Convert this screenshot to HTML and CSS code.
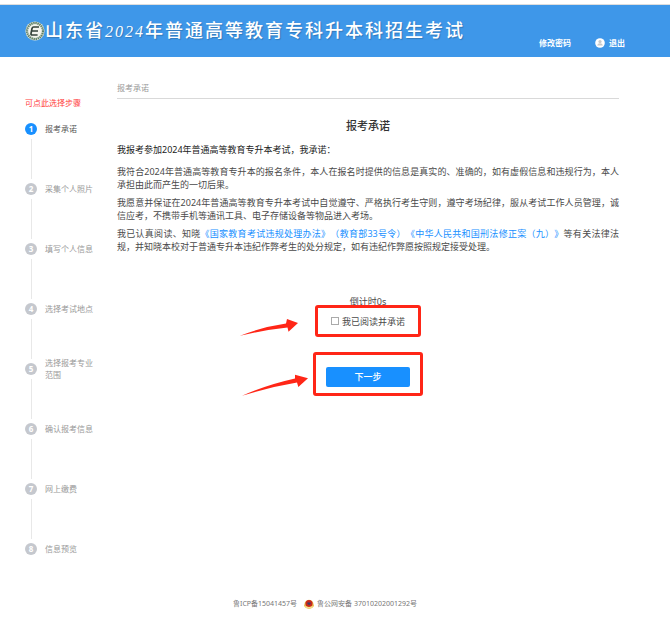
FILE: index.html
```
<!DOCTYPE html>
<html lang="zh-CN">
<head>
    <meta charset="UTF-8">
    <meta name="viewport" content="width=device-width, initial-scale=1.0">
    <title>报考承诺</title>
    <link rel="stylesheet" href="styles.css">
</head>
<body>
<!-- Header -->
<header class="header">
    <div class="brand">
        <svg class="logo" viewBox="0 0 20 20" aria-hidden="true">
            <circle cx="10" cy="10" r="9.6" fill="#dfe6d8"/>
            <circle cx="10" cy="10" r="8" fill="none" stroke="#5f7f68" stroke-width="2.2" stroke-dasharray="1.4 0.7"/>
            <circle cx="10" cy="10" r="6.4" fill="#f4f4ee"/>
            <path d="M14 6H8.6Q7.4 6 7 7.4L6 12.6Q5.8 14 7.2 14H12.6M6.8 10H13" fill="none" stroke="#34423a" stroke-width="1.7"/>
        </svg>
        <h1>山东省<span class="year">2024</span>年普通高等教育专科升本科招生考试</h1>
    </div>
    <nav class="nav">
        <a href="#">修改密码</a>
        <a href="#" class="logout">
            <svg viewBox="0 0 10 10" aria-hidden="true">
                <circle cx="5" cy="5" r="4.8" fill="#fff"/>
                <circle cx="5" cy="3.6" r="1.6" fill="#c9c9c9"/>
                <path d="M2.2 7.6Q2.4 5.2 5 5.2T7.8 7.6Z" fill="#c9c9c9"/>
            </svg>
            退出
        </a>
    </nav>
</header>

<div class="container">
    <!-- Steps -->
    <aside class="sidebar">
        <p class="tip">可点此选择步骤</p>
        <ol class="steps">
            <li class="active"><span class="num">1</span><a href="#">报考承诺</a></li>
            <li><span class="num">2</span><a href="#">采集个人照片</a></li>
            <li><span class="num">3</span><a href="#">填写个人信息</a></li>
            <li><span class="num">4</span><a href="#">选择考试地点</a></li>
            <li><span class="num">5</span><a href="#">选择报考专业范围</a></li>
            <li><span class="num">6</span><a href="#">确认报考信息</a></li>
            <li><span class="num">7</span><a href="#">网上缴费</a></li>
            <li><span class="num">8</span><a href="#">信息预览</a></li>
        </ol>
    </aside>

    <!-- Main content -->
    <main class="main-content">
        <div class="crumb">报考承诺</div>
        <h2>报考承诺</h2>
        <p class="intro">我报考参加2024年普通高等教育专升本考试，我承诺：</p>
        <div class="promise">
            <p>我符合2024年普通高等教育专升本的报名条件，本人在报名时提供的信息是真实的、准确的，如有虚假信息和违规行为，本人承担由此而产生的一切后果。</p>
            <p>我愿意并保证在2024年普通高等教育专升本考试中自觉遵守、严格执行考生守则，遵守考场纪律，服从考试工作人员管理，诚信应考，不携带手机等通讯工具、电子存储设备等物品进入考场。</p>
            <p>我已认真阅读、知晓<a href="#">《国家教育考试违规处理办法》（教育部33号令）</a><a href="#">《中华人民共和国刑法修正案（九）》</a>等有关法律法规，并知晓本校对于普通专升本违纪作弊考生的处分规定，如有违纪作弊愿按照规定接受处理。</p>
        </div>

        <form class="confirm">
            <div class="countdown">倒计时0s</div>
            <div class="mark mark-agree">
                <svg class="arrow" viewBox="0 0 58 19" aria-hidden="true">
                    <path d="M0 17.8Q22 9 46 5.5L47 1L58 5L48.5 13.7L47.5 9.5Q24 12 0 17.8Z"/>
                </svg>
                <input type="checkbox" id="agree">
                <label for="agree">我已阅读并承诺</label>
            </div>
            <div class="mark mark-next">
                <svg class="arrow" viewBox="0 0 66 22" aria-hidden="true">
                    <path d="M0 21.8Q24 11 53 4.5L53 0.7L66 4.3L56.3 13L55 8.5Q28 13 0 21.8Z"/>
                </svg>
                <button type="button">下一步</button>
            </div>
        </form>
    </main>
</div>

<!-- Footer -->
<footer class="footer">
    <a href="#">鲁ICP备15041457号</a>
    <a href="#" class="police">
        <svg viewBox="0 0 10 10" aria-hidden="true">
            <path d="M1 3Q5 -1.6 9 3L10 7Q8 10 5 10T0 7Z" fill="#e9b84b"/>
            <circle cx="5" cy="4.4" r="3.5" fill="#c9281c"/>
            <path d="M3.4 3.4H6.6V4.8Q6.2 5.6 5 6Q3.8 5.6 3.4 4.8Z" fill="#38406e"/>
            <path d="M1.2 7.6Q5 9.8 8.8 7.6" fill="none" stroke="#f7de8c" stroke-width="1.4"/>
        </svg>
        鲁公网安备 37010202001292号
    </a>
</footer>
</body>
</html>
```
FILE: styles.css
```
* {
    box-sizing: border-box;
}

body {
    margin: 0;
    background: #fff;
    color: #4a4a4a;
    font-family: "Noto Sans", "Noto Sans CJK SC", sans-serif;
    font-size: 9px;
    line-height: 13px;
    text-spacing-trim: space-all;
}

h1, h2, p, ol {
    margin: 0;
    padding: 0;
}

a {
    color: inherit;
    text-decoration: none;
}

/* Header */
.header {
    display: flex;
    justify-content: space-between;
    margin-top: 4px;
    padding: 0 45px 0 25px;
    border-top: 1px solid #ddd;
    background: #3e97e9;
    color: #fff;
}

.brand {
    display: flex;
    align-items: center;
    height: 52px;
}

.logo {
    width: 20px;
    height: 20px;
}

.brand h1 {
    font-family: "Liberation Serif", "Noto Sans CJK SC", serif;
    font-size: 18px;
    font-weight: 500;
    line-height: 24px;
    letter-spacing: 2px;
    white-space: nowrap;
    text-shadow: 1px 1px 1px rgba(0, 0, 0, 0.2);
}

.year {
    font-size: 16px;
    font-style: italic;
}

.nav {
    display: flex;
    align-items: flex-end;
    gap: 24px;
    padding-bottom: 8px;
    font-size: 8px;
    font-weight: 700;
    line-height: 12px;
}

.logout {
    display: flex;
    align-items: center;
    gap: 4px;
}

.logout svg {
    width: 10px;
    height: 10px;
}

.container {
    display: flex;
    padding: 0 51px 0 25px;
}

/* Steps */
.sidebar {
    flex: none;
    width: 92px;
    padding-top: 40px;
    font-size: 8px;
    line-height: 12px;
}

.tip {
    color: #ff4040;
}

.steps {
    margin-top: 14px;
    list-style: none;
}

.steps li {
    display: grid;
    grid-template-columns: 12px 48px;
    grid-template-rows: 12px 40px;
    gap: 4px 8px;
    align-items: center;
    margin-bottom: 4px;
    color: #999;
}

.steps li:last-child {
    grid-template-rows: 12px;
    margin-bottom: 0;
}

.steps li::after {
    content: "";
    justify-self: center;
    width: 1px;
    height: 40px;
    background: #e8e8e8;
}

.steps li:last-child::after {
    display: none;
}

.num {
    width: 12px;
    height: 12px;
    border-radius: 50%;
    background: #c5c8ce;
    color: #fff;
    font-weight: 700;
    text-align: center;
}

.steps .active {
    color: #555;
}

.active .num {
    background: #1890ff;
}

/* Main content */
.main-content {
    flex: 1;
    padding-top: 25px;
}

.crumb {
    padding-bottom: 4px;
    border-bottom: 1px solid #d9d9d9;
    color: #999;
    font-size: 8px;
    line-height: 12px;
}

.main-content h2 {
    margin-top: 19px;
    color: #333;
    font-size: 11px;
    font-weight: 500;
    line-height: 16px;
    text-align: center;
}

.intro {
    margin-top: 9px;
    color: #222;
}

.promise {
    margin-top: 9px;
    text-align: justify;
}

.promise p {
    margin-bottom: 5px;
}

.promise a {
    color: #1890ff;
}

.confirm {
    display: flex;
    flex-direction: column;
    align-items: center;
    margin-top: 42px;
}

/* Red frames with arrows */
.mark {
    position: relative;
    display: flex;
    align-items: center;
    justify-content: center;
    border: 3px solid #ff2617;
    border-radius: 3px;
}

.mark-agree {
    gap: 3px;
    width: 106px;
    height: 32px;
    margin-top: -3px;
}

.mark-next {
    width: 110px;
    height: 44px;
    margin-top: 15px;
    padding-top: 5px;
}

.arrow {
    position: absolute;
    top: 10px;
    right: 100%;
    width: 58px;
    height: 19px;
    margin-right: 20px;
    fill: #ff2617;
}

.mark-next .arrow {
    top: 19px;
    width: 66px;
    height: 22px;
    margin-right: 8px;
}

.mark input {
    appearance: none;
    width: 8px;
    height: 8px;
    margin: 0;
    border: 1px solid #aaa;
    background: #fff;
}

.mark input:checked {
    background: #1890ff;
}

.mark button {
    width: 84px;
    height: 20px;
    padding: 0;
    border: none;
    border-radius: 2px;
    background: #1890ff;
    color: #fff;
    font-family: inherit;
    font-size: 9px;
    font-weight: 500;
    cursor: pointer;
}

/* Footer */
.footer {
    display: flex;
    justify-content: center;
    gap: 7px;
    padding: 43px 20px 11px 0;
    color: #777;
    font-size: 7px;
    line-height: 12px;
}

.police {
    display: flex;
    align-items: center;
    gap: 3px;
}

.police svg {
    width: 10px;
    height: 10px;
}
```
